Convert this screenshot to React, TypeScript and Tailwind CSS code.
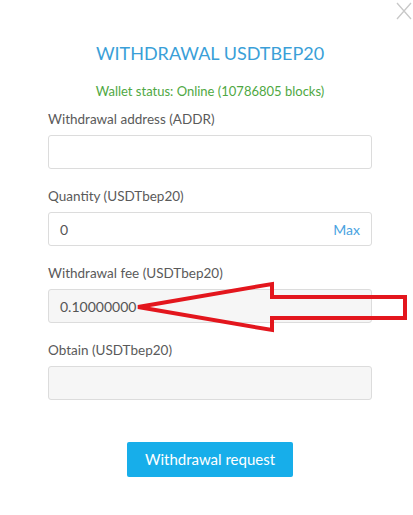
import React from 'react'

const fields = [
  { label: 'Withdrawal address (ADDR)', value: '', disabled: false, max: false },
  { label: 'Quantity (USDTbep20)', value: '0', disabled: false, max: true },
  { label: 'Withdrawal fee (USDTbep20)', value: '0.10000000', disabled: true, max: false },
  { label: 'Obtain (USDTbep20)', value: '', disabled: true, max: false },
]

export default function App() {
  return (
    <div
      className="relative w-[413px] h-[515px] bg-white overflow-hidden"
      style={{ fontFamily: 'Lato, "Noto Sans", sans-serif' }}
    >
      <button className="absolute right-[1px] top-[2px] w-[16px] h-[18px] text-[#c8c8c8]">
        <svg viewBox="0 0 16 18" className="w-full h-full" fill="none" stroke="currentColor" strokeWidth="1.3">
          <path d="M1 1 L15 17 M15 1 L1 17" />
        </svg>
      </button>

      <div className="ml-[48px] w-[324px] pt-[39px]">
        <h2 className="text-center text-[18px] leading-[28px] text-[#3a9fd8]">
          WITHDRAWAL USDTBEP20
        </h2>
        <p className="mt-[14px] text-center text-[13px] leading-[20px] text-[#4fa843]">
          Wallet status: Online (10786805 blocks)
        </p>

        <div className="mt-[8px]">
          {fields.map((f, i) => (
            <div key={i} className={i > 0 ? 'mt-[17px]' : ''}>
              <label className="block text-[13.5px] leading-[20px] text-[#5a5a5a]">
                {f.label}
              </label>
              <div
                className={
                  'mt-[6px] h-[34px] rounded-[3px] border border-[#dcdcdc] flex items-center px-[11px] text-[14px] text-[#555] ' +
                  (f.disabled ? 'bg-[#f6f6f6]' : 'bg-white')
                }
              >
                <span className="flex-1">{f.value}</span>
                {f.max && <span className="text-[#4aa3df]">Max</span>}
              </div>
            </div>
          ))}
        </div>

        <div className="mt-[42px] flex justify-center">
          <button className="w-[166px] h-[35px] rounded-[2px] bg-[#17aeea] text-white text-[15px]">
            Withdrawal request
          </button>
        </div>
      </div>

      <svg
        className="absolute left-0 top-0 pointer-events-none"
        width="413"
        height="515"
        viewBox="0 0 413 515"
      >
        <polygon
          points="138,307 272,284 272,297 405,297 405,318 272,318 272,330"
          fill="none"
          stroke="#e3161d"
          strokeWidth="4"
          strokeLinejoin="miter"
        />
      </svg>
    </div>
  )
}
